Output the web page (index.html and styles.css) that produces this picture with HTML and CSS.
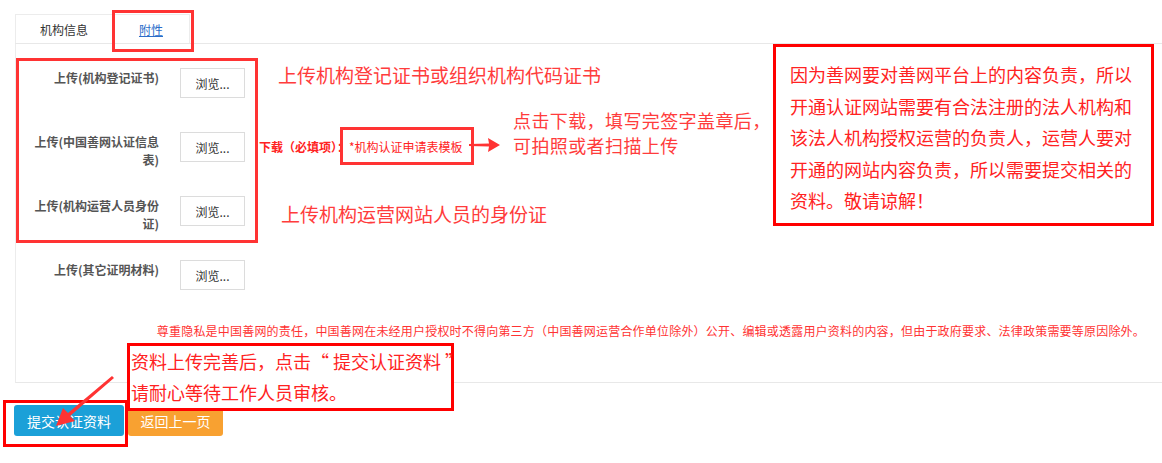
FILE: index.html
```html
<!DOCTYPE html>
<html lang="zh-CN">
<head>
    <meta charset="UTF-8">
    <title>机构认证 - 附件</title>
    <link rel="stylesheet" href="styles.css">
</head>
<body>
    <div class="page">
        <!-- Tabs -->
        <ul class="tabs">
            <li class="tab">机构信息</li>
            <li class="tab tab-active"><a href="#">附性</a></li>
        </ul>

        <div class="panel">
            <div class="form">
                <div class="row">
                    <label class="row-label">上传(机构登记证书)</label>
                    <button class="browse">浏览...</button>
                </div>
                <div class="row">
                    <label class="row-label">上传(中国善网认证信息表)</label>
                    <button class="browse">浏览...</button>
                    <span class="download"><b>下载（必填项）：</b>*机构认证申请表模板</span>
                </div>
                <div class="row">
                    <label class="row-label">上传(机构运营人员身份证)</label>
                    <button class="browse">浏览...</button>
                </div>
                <div class="row">
                    <label class="row-label">上传(其它证明材料)</label>
                    <button class="browse">浏览...</button>
                </div>
            </div>
            <p class="privacy">尊重隐私是中国善网的责任，中国善网在未经用户授权时不得向第三方（中国善网运营合作单位除外）公开、编辑或透露用户资料的内容，但由于政府要求、法律政策需要等原因除外。</p>
        </div>

        <div class="actions">
            <button class="btn btn-blue">提交认证资料</button>
            <button class="btn btn-orange">返回上一页</button>
        </div>

        <!-- Annotations drawn over the page -->
        <div class="mark mark-tab"></div>
        <div class="mark mark-group"></div>
        <div class="mark mark-template"></div>
        <div class="mark mark-submit"></div>

        <div class="note note-cert">上传机构登记证书或组织机构代码证书</div>
        <div class="note note-download">点击下载，填写完签字盖章后，<br>可拍照或者扫描上传</div>
        <div class="note note-id">上传机构运营网站人员的身份证</div>

        <div class="note-box note-reason">
            因为善网要对善网平台上的内容负责，所以<br>
            开通认证网站需要有合法注册的法人机构和<br>
            该法人机构授权运营的负责人，运营人要对<br>
            开通的网站内容负责，所以需要提交相关的<br>
            资料。敬请谅解！
        </div>

        <div class="note-box note-submit">
            资料上传完善后，点击“ 提交认证资料 ”<br>
            请耐心等待工作人员审核。
        </div>

        <svg class="arrow arrow-right" width="32" height="16" viewBox="0 0 32 16">
            <path d="M0 7 L20 6.5 L19 1 L31 8 L19 15 L20 9.5 L0 9 Z" fill="#f33"/>
        </svg>

        <svg class="arrow arrow-down" width="70" height="56" viewBox="0 0 70 56">
            <path d="M64 2 L66 4 L22 42 L27 47 L8 52 L15 34 L20 39 Z" fill="#f33"/>
        </svg>
    </div>
</body>
</html>
```

FILE: styles.css
```css
body {
    margin: 0;
    font-family: "Noto Sans CJK SC", "Liberation Sans", sans-serif;
    font-size: 12px;
    color: #333;
    background: #fff;
}
.page {
    position: relative;
    height: 463px;
    overflow: hidden;
    padding-top: 14px;
    box-sizing: border-box;
}

/* tabs */
.tabs {
    display: flex;
    list-style: none;
    margin: 0 0 0 15px;
    padding: 0;
    border-bottom: 1px solid #e8e8e8;
}
.tab {
    height: 29px;
    line-height: 30px;
    box-sizing: border-box;
    border: 1px solid #ececec;
    border-bottom: none;
    text-align: center;
    background: #fff;
}
.tab:first-child {
    width: 97px;
    border-right: none;
}
.tab-active {
    width: 78px;
}
.tab-active a {
    color: #2b6dc9;
    text-decoration: underline;
}

/* panel */
.panel {
    margin-left: 15px;
    border-left: 1px solid #ececec;
    border-bottom: 1px solid #e8e8e8;
    padding: 24px 0 42px;
}
.form {
    display: flex;
    flex-direction: column;
    gap: 34px;
}
.row {
    display: flex;
    align-items: flex-start;
    height: 30px;
}
.row-label {
    width: 126px;
    margin-left: 17px;
    margin-right: 21px;
    text-align: right;
    font-weight: bold;
    color: #555;
    line-height: 18px;
    padding-top: 1px;
}
.browse {
    width: 65px;
    height: 30px;
    border: 1px solid #dcdcdc;
    background: #fff;
    font-family: inherit;
    font-size: 12px;
    color: #333;
    padding: 0;
}
.download {
    margin-left: 14px;
    line-height: 30px;
    color: #f22;
    white-space: nowrap;
}
.privacy {
    margin: 32px 17px 0 0;
    text-align: right;
    line-height: 18px;
    color: #f33;
    white-space: nowrap;
    letter-spacing: 0.2px;
}

/* buttons */
.actions {
    display: flex;
    gap: 4px;
    margin: 22px 0 0 14px;
}
.btn {
    height: 31px;
    border: none;
    border-radius: 3px;
    color: #fff;
    font-family: inherit;
    font-size: 14px;
    padding: 0;
}
.btn-blue {
    width: 110px;
    background: #1ba0d8;
}
.btn-orange {
    width: 95px;
    background: #f8a131;
}

/* annotation overlays */
.mark {
    position: absolute;
    border: 3px solid #f33;
    box-sizing: border-box;
}
.mark-tab {
    left: 112px;
    top: 10px;
    width: 82px;
    height: 42px;
}
.mark-group {
    left: 16px;
    top: 58px;
    width: 242px;
    height: 185px;
}
.mark-template {
    left: 340px;
    top: 127px;
    width: 134px;
    height: 38px;
}
.mark-submit {
    left: 3px;
    top: 400px;
    width: 125px;
    height: 47px;
    border-color: #f00;
}
.note {
    position: absolute;
    color: #ff3c3c;
    white-space: nowrap;
}
.note-cert {
    left: 278px;
    top: 63px;
    font-size: 19px;
    line-height: 24px;
}
.note-download {
    left: 513px;
    top: 108px;
    font-size: 18px;
    line-height: 25px;
    letter-spacing: 0.4px;
}
.note-id {
    left: 281px;
    top: 202px;
    font-size: 19px;
    line-height: 24px;
}
.note-box {
    position: absolute;
    border: 3px solid #f00;
    background: #fff;
    color: #f22;
    font-size: 18px;
    white-space: nowrap;
    box-sizing: border-box;
}
.note-reason {
    left: 773px;
    top: 44px;
    width: 381px;
    height: 182px;
    padding: 12px 0 0 14px;
    line-height: 31.5px;
}
.note-submit {
    left: 127px;
    top: 343px;
    width: 327px;
    height: 68px;
    padding: 0 0 0 1px;
    line-height: 31px;
}
.arrow {
    position: absolute;
}
.arrow-right {
    left: 469px;
    top: 137px;
}
.arrow-down {
    left: 48px;
    top: 374px;
}
```
